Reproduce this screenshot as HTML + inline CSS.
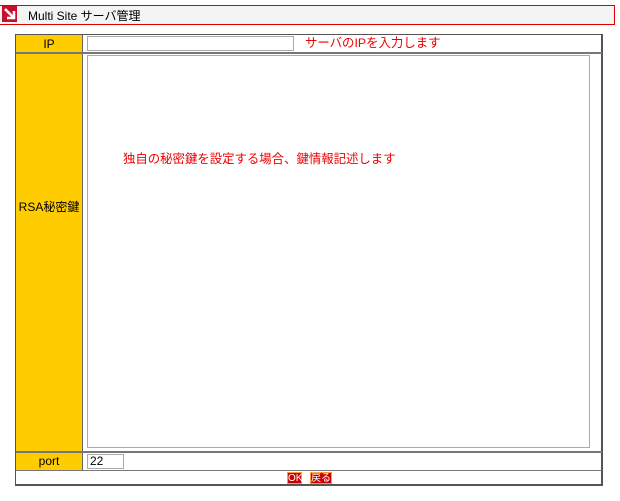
<!DOCTYPE html>
<html><head><meta charset="utf-8"><style>
*{margin:0;padding:0;box-sizing:border-box}
body{width:620px;height:501px;background:#fff;font-family:"Liberation Sans","Noto Sans CJK JP",sans-serif;font-size:12px;color:#000;position:relative}
.a{position:absolute}
.hdr{left:0;top:5px;width:615px;height:20px;background:#f4f4f4;border:1px solid #d00;border-left:none}
.ic{left:2px;top:6px;width:15px;height:16px;background:#c8102e}
.red{color:#e00;font-size:12.4px}
.lab{background:#fc0;text-align:center;line-height:18px}
.inp{background:#fff;border:1px solid #aaa}
.btn{background:#c00;color:#fff;font-size:10px;line-height:11px;text-align:center;border:1px solid #f93}
</style></head><body>
<div class="a hdr"></div>
<div class="a ic"><svg width="15" height="16" viewBox="0 0 15 16"><path d="M3 3 L11 11 M5 12 H12 V5" stroke="#fff" stroke-width="2.5" fill="none"/></svg></div>
<div class="a" style="left:28px;top:7px;font-size:12px">Multi Site サーバ管理</div>
<div class="a" style="left:15px;top:34px;width:588px;height:452px;border:1px solid #555;border-right-width:2px;border-bottom-width:2px"></div>
<div class="a lab" style="left:16px;top:35px;width:66px;height:17px">IP</div>
<div class="a lab" style="left:16px;top:54px;width:66px;height:397px;line-height:306px">RSA秘密鍵</div>
<div class="a lab" style="left:16px;top:453px;width:66px;height:17px;line-height:17px">port</div>
<div class="a" style="left:82px;top:35px;width:1px;height:435px;background:#666"></div>
<div class="a" style="left:16px;top:52px;width:586px;height:2px;background:#777"></div>
<div class="a" style="left:16px;top:451px;width:586px;height:2px;background:#777"></div>
<div class="a" style="left:16px;top:470px;width:586px;height:1px;background:#777"></div>
<div class="a inp" style="left:87px;top:36px;width:207px;height:15px"></div>
<div class="a red" style="left:305px;top:35px;line-height:17px">サーバのIPを入力します</div>
<div class="a inp" style="left:87px;top:55px;width:503px;height:393px"></div>
<div class="a red" style="left:123px;top:150px;line-height:18px">独自の秘密鍵を設定する場合、鍵情報記述します</div>
<div class="a inp" style="left:87px;top:454px;width:37px;height:15px;line-height:13px;padding-left:2px">22</div>
<div class="a btn" style="left:287px;top:472px;width:15px;height:12px">OK</div>
<div class="a btn" style="left:310px;top:472px;width:22px;height:12px">戻る</div>
</body></html>
